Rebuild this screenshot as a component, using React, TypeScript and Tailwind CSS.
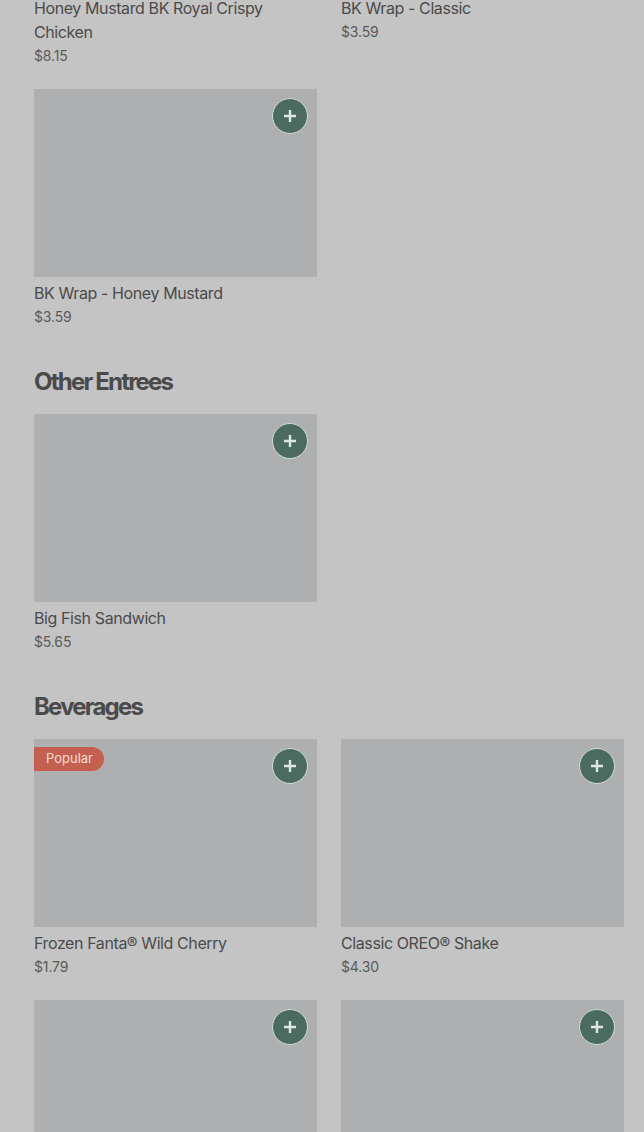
import React from "react";

type Item = { name: string; price: string; popular?: boolean };

const font = { fontFamily: "Inter, 'Liberation Sans', sans-serif" };

function AddButton() {
  return (
    <button
      type="button"
      aria-label="Add"
      className="absolute right-[9px] top-[9px] flex h-9 w-9 items-center justify-center rounded-full border-[1.5px] border-[#d3dcd8] bg-[#4b6b60]"
    >
      <svg width="12" height="12" viewBox="0 0 12 12" fill="none">
        <path d="M6 1v10M1 6h10" stroke="#dfe7e3" strokeWidth="2.4" strokeLinecap="square" />
      </svg>
    </button>
  );
}

function MenuCard({ item }: { item: Item }) {
  return (
    <div>
      <div className="relative h-[188px] bg-[#adafb1]">
        {item.popular && (
          <span className="absolute left-0 top-2 flex h-6 items-center rounded-r-full bg-[#c4604f] pl-3 pr-[11px] text-[13px] text-[#f3dcd6]">
            Popular
          </span>
        )}
        <AddButton />
      </div>
      <p className="mt-1 text-base leading-6 tracking-[-0.025em] text-[#4b4b4b]">{item.name}</p>
      <p className="text-sm leading-6 tracking-[-0.01em] text-[#5a5a5a]">{item.price}</p>
    </div>
  );
}

function Grid({ items, className = "" }: { items: Item[]; className?: string }) {
  return (
    <div className={`grid grid-cols-2 gap-x-6 gap-y-[21px] ${className}`}>
      {items.map((item) => (
        <MenuCard key={item.name} item={item} />
      ))}
    </div>
  );
}

function Section({ title, items }: { title: string; items: Item[] }) {
  return (
    <section className="mt-[37px]">
      <h2 className="mb-4 text-2xl font-bold leading-8 tracking-[-0.075em] text-[#4a4a4a]">
        {title}
      </h2>
      <Grid items={items} />
    </section>
  );
}

export default function App() {
  return (
    <div
      className="h-[1132px] overflow-hidden bg-[#c4c4c4] pl-[34px] pr-5"
      style={font}
    >
      <Grid
        className="-mt-[196px]"
        items={[
          { name: "Honey Mustard BK Royal Crispy Chicken", price: "$8.15" },
          { name: "BK Wrap - Classic", price: "$3.59" },
          { name: "BK Wrap - Honey Mustard", price: "$3.59" },
        ]}
      />
      <Section title="Other Entrees" items={[{ name: "Big Fish Sandwich", price: "$5.65" }]} />
      <Section
        title="Beverages"
        items={[
          { name: "Frozen Fanta® Wild Cherry", price: "$1.79", popular: true },
          { name: "Classic OREO® Shake", price: "$4.30" },
          { name: "Frozen Coca-Cola®", price: "$1.79" },
          { name: "Vanilla Shake", price: "$4.30" },
        ]}
      />
    </div>
  );
}
